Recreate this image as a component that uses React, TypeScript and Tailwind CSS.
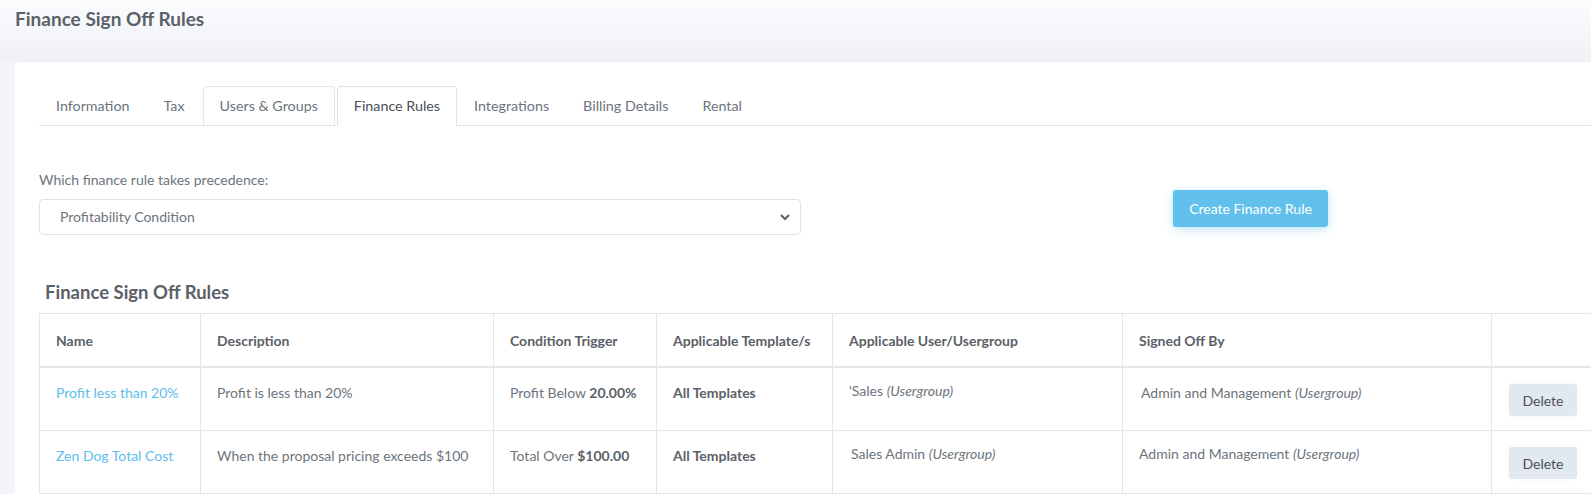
import React from "react";

const tabs = [
  { label: "Information", state: "plain" },
  { label: "Tax", state: "plain" },
  { label: "Users & Groups", state: "hover" },
  { label: "Finance Rules", state: "active" },
  { label: "Integrations", state: "plain" },
  { label: "Billing Details", state: "plain" },
  { label: "Rental", state: "plain" },
];

function DeleteButton() {
  return (
    <button className="h-[32px] w-[68px] rounded-[3px] bg-[#e2e8ef] text-[14px] text-[#4a5158] shadow-[0_0_6px_rgba(0,0,0,0.04)]">
      Delete
    </button>
  );
}

export default function App() {
  return (
    <div
      className="w-[1591px] h-[494px] overflow-hidden bg-[#f4f5f9] text-[#6c757d]"
      style={{ fontFamily: "Lato, 'Open Sans', sans-serif" }}
    >
      <div className="h-[62px] bg-gradient-to-b from-[#fbfcfe] to-[#eff1f5] px-[15px] pt-[6px]">
        <h1 className="text-[19px] leading-[26px] font-bold text-[#5b6168]">Finance Sign Off Rules</h1>
      </div>
      <div className="pl-[15px]">
        <div className="w-[1650px] rounded-[4px] bg-white pl-[24px] pt-[24px] pb-10">
          {/* Tabs */}
          <div className="flex border-b border-[#dee2e6] text-[14.3px] leading-[21px]">
            {tabs.map((t) => (
              <div
                key={t.label}
                className={
                  t.state === "active"
                    ? "ml-[2px] -mb-px rounded-t-[4px] border border-[#dee2e6] border-b-white bg-white px-4 py-2 text-[#495057]"
                    : t.state === "hover"
                    ? "ml-px rounded-t-[4px] border border-b-0 border-[#e3e6ea] px-4 py-2 pb-[9px] text-[#6c757d]"
                    : "border border-transparent px-4 py-2 text-[#6c757d]"
                }
              >
                {t.label}
              </div>
            ))}
          </div>

          {/* Precedence row */}
          <div className="mt-[43px] flex items-start">
            <div className="w-[762px]">
              <div className="text-[14px] leading-[21px] text-[#6c757d]">Which finance rule takes precedence:</div>
              <div className="relative mt-[9px] h-[36px] rounded-[4px] border border-[#dfe3e8] bg-white">
                <div className="pl-[20px] text-[14px] leading-[34px] text-[#6c757d]">Profitability Condition</div>
                <svg
                  className="absolute right-[10px] top-[13px]"
                  width="10"
                  height="8"
                  viewBox="0 0 10 8"
                >
                  <path d="M1 2 L5 6 L9 2" fill="none" stroke="#5b6168" strokeWidth="2" />
                </svg>
              </div>
            </div>
            <button className="ml-[372px] mt-[21px] h-[37px] w-[155px] rounded-[3px] bg-[#62c1ec] text-[14px] text-white shadow-[0_2px_8px_rgba(98,193,236,0.45)]">
              Create Finance Rule
            </button>
          </div>

          {/* Section heading */}
          <h2 className="mt-[44px] pl-[6px] text-[18.5px] leading-[26px] font-bold text-[#5b6168]">Finance Sign Off Rules</h2>

          <table className="mt-[8px] border-collapse border border-[#e3e7ec] text-[14px] leading-[21px] text-[#6c757d]">
            <colgroup>
              <col className="w-[161px]" />
              <col className="w-[293px]" />
              <col className="w-[163px]" />
              <col className="w-[176px]" />
              <col className="w-[290px]" />
              <col className="w-[369px]" />
              <col className="w-[130px]" />
            </colgroup>
            <thead>
              <tr className="text-left font-bold text-[#5b6168]">
                {["Name", "Description", "Condition Trigger", "Applicable Template/s", "Applicable User/Usergroup", "Signed Off By", ""].map((h, i) => (
                  <th key={i} className="border border-b-2 border-[#e3e7ec] px-4 pt-4 pb-[15px] font-bold align-top">
                    {h || "\u00a0"}
                  </th>
                ))}
              </tr>
            </thead>
            <tbody>
              <tr>
                <td className="border border-[#e3e7ec] px-4 pt-[14px] align-top text-[#5ebdea]">Profit less than 20%</td>
                <td className="border border-[#e3e7ec] px-4 pt-[14px] align-top">Profit is less than 20%</td>
                <td className="border border-[#e3e7ec] px-4 pt-[14px] align-top">
                  Profit Below <b className="text-[#5b6168]">20.00%</b>
                </td>
                <td className="border border-[#e3e7ec] px-4 pt-[14px] align-top font-bold text-[#5b6168]">All Templates</td>
                <td className="border border-[#e3e7ec] px-4 pt-[12px] align-top">
                  'Sales <i>(Usergroup)</i>
                </td>
                <td className="border border-[#e3e7ec] px-4 pl-[18px] pt-[14px] align-top">
                  Admin and Management <i>(Usergroup)</i>
                </td>
                <td className="border border-[#e3e7ec] pl-[17px] pt-4 pb-[14px] align-top">
                  <DeleteButton />
                </td>
              </tr>
              <tr>
                <td className="border border-[#e3e7ec] px-4 pt-[14px] align-top text-[#5ebdea]">Zen Dog Total Cost</td>
                <td className="border border-[#e3e7ec] px-4 pt-[14px] align-top">When the proposal pricing exceeds $100</td>
                <td className="border border-[#e3e7ec] px-4 pt-[14px] align-top">
                  Total Over <b className="text-[#5b6168]">$100.00</b>
                </td>
                <td className="border border-[#e3e7ec] px-4 pt-[14px] align-top font-bold text-[#5b6168]">All Templates</td>
                <td className="border border-[#e3e7ec] px-4 pl-[18px] pt-[12px] align-top">
                  Sales Admin <i>(Usergroup)</i>
                </td>
                <td className="border border-[#e3e7ec] px-4 pt-[12px] align-top">
                  Admin and Management <i>(Usergroup)</i>
                </td>
                <td className="border border-[#e3e7ec] pl-[17px] pt-4 pb-[14px] align-top">
                  <DeleteButton />
                </td>
              </tr>
            </tbody>
          </table>
        </div>
      </div>
    </div>
  );
}
